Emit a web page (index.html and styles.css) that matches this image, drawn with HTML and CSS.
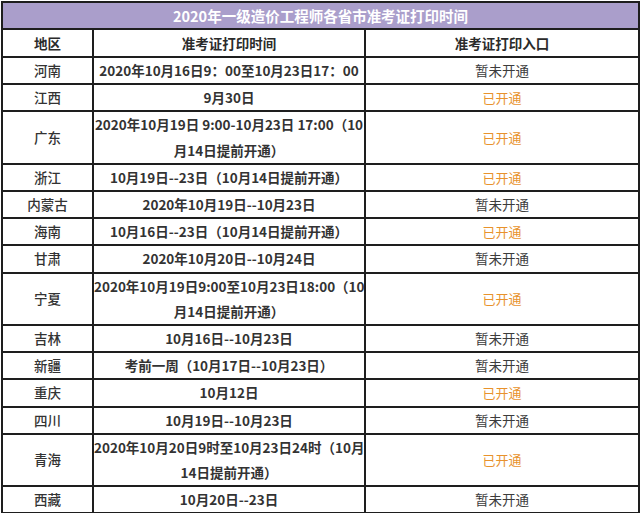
FILE: index.html
```html
<!DOCTYPE html>
<html lang="zh-CN">
<head>
<meta charset="utf-8">
<title>2020年一级造价工程师各省市准考证打印时间</title>
<link rel="stylesheet" href="styles.css">
</head>
<body>
<table class="sheet">
  <colgroup>
    <col class="c-region">
    <col class="c-time">
    <col class="c-entry">
  </colgroup>
  <thead>
    <tr><th class="title" colspan="3">2020年一级造价工程师各省市准考证打印时间</th></tr>
    <tr class="head"><th>地区</th><th>准考证打印时间</th><th>准考证打印入口</th></tr>
  </thead>
  <tbody>
    <tr><td class="region">河南</td><td class="time">2020年10月16日9：00至10月23日17：00</td><td class="closed">暂未开通</td></tr>
    <tr><td class="region">江西</td><td class="time">9月30日</td><td class="open">已开通</td></tr>
    <tr><td class="region">广东</td><td class="time">2020年10月19日 9:00-10月23日 17:00（10<br>月14日提前开通）</td><td class="open">已开通</td></tr>
    <tr><td class="region">浙江</td><td class="time">10月19日--23日（10月14日提前开通）</td><td class="open">已开通</td></tr>
    <tr><td class="region">内蒙古</td><td class="time">2020年10月19日--10月23日</td><td class="closed">暂未开通</td></tr>
    <tr><td class="region">海南</td><td class="time">10月16日--23日（10月14日提前开通）</td><td class="open">已开通</td></tr>
    <tr><td class="region">甘肃</td><td class="time">2020年10月20日--10月24日</td><td class="closed">暂未开通</td></tr>
    <tr><td class="region">宁夏</td><td class="time">2020年10月19日9:00至10月23日18:00（10<br>月14日提前开通）</td><td class="open">已开通</td></tr>
    <tr><td class="region">吉林</td><td class="time">10月16日--10月23日</td><td class="closed">暂未开通</td></tr>
    <tr><td class="region">新疆</td><td class="time">考前一周（10月17日--10月23日）</td><td class="closed">暂未开通</td></tr>
    <tr><td class="region">重庆</td><td class="time">10月12日</td><td class="open">已开通</td></tr>
    <tr><td class="region">四川</td><td class="time">10月19日--10月23日</td><td class="closed">暂未开通</td></tr>
    <tr><td class="region">青海</td><td class="time">2020年10月20日9时至10月23日24时（10月<br>14日提前开通）</td><td class="open">已开通</td></tr>
    <tr><td class="region">西藏</td><td class="time">10月20日--23日</td><td class="closed">暂未开通</td></tr>
  </tbody>
</table>
</body>
</html>
```

FILE: styles.css
```css
html, body {
  margin: 0;
  padding: 0;
  background: #ffffff;
}

body {
  padding: 1px 0 0 1px;
  font-family: "Noto Sans CJK SC", "Noto Sans", sans-serif;
  color: #333333;
}

.sheet {
  border-collapse: collapse;
  table-layout: fixed;
  width: 637px;
}

.c-region { width: 91px; }
.c-time { width: 272px; }
.c-entry { width: 274px; }

.sheet th,
.sheet td {
  border: 2px solid #1e1e1e;
  padding: 0;
  text-align: center;
  vertical-align: middle;
  font-size: 13.5px;
  line-height: 25px;
  white-space: nowrap;
}

.sheet tbody td {
  height: 25px;
  line-height: 25.2px;
}

.sheet .title {
  background: #aa9ecb;
  color: #ffffff;
  font-size: 14.5px;
  font-weight: 700;
  height: 25px;
  line-height: 25px;
}

.head th {
  font-weight: 700;
  color: #2b2b2b;
  height: 26px;
}

.region {
  font-weight: 500;
  color: #333333;
}

.time {
  font-weight: 700;
  color: #333333;
}

.closed {
  font-size: 13px;
  font-weight: 400;
  color: #3c3c3c;
}

.sheet .open {
  font-size: 13px;
  font-weight: 400;
  color: #e8922c;
}
```
